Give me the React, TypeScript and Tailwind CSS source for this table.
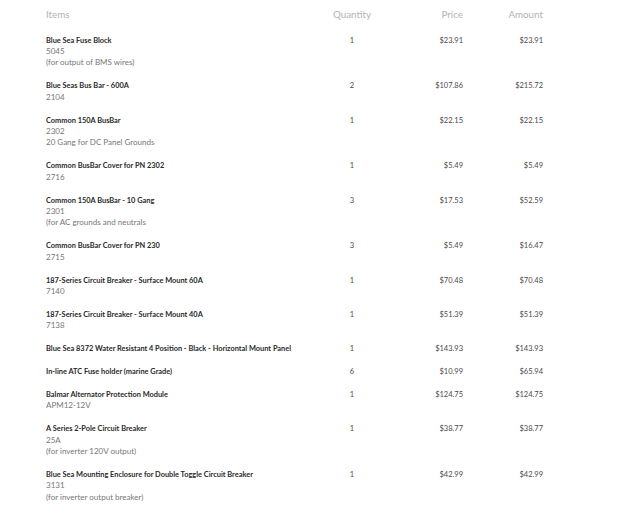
const items = [
  { name: "Blue Sea Fuse Block", lines: ["5045", "(for output of BMS wires)"], qty: 1, price: "$23.91", amount: "$23.91" },
  { name: "Blue Seas Bus Bar - 600A", lines: ["2104"], qty: 2, price: "$107.86", amount: "$215.72" },
  { name: "Common 150A BusBar", lines: ["2302", "20 Gang for DC Panel Grounds"], qty: 1, price: "$22.15", amount: "$22.15" },
  { name: "Common BusBar Cover for PN 2302", lines: ["2716"], qty: 1, price: "$5.49", amount: "$5.49" },
  { name: "Common 150A BusBar - 10 Gang", lines: ["2301", "(for AC grounds and neutrals"], qty: 3, price: "$17.53", amount: "$52.59" },
  { name: "Common BusBar Cover for PN 230", lines: ["2715"], qty: 3, price: "$5.49", amount: "$16.47" },
  { name: "187-Series Circuit Breaker - Surface Mount 60A", lines: ["7140"], qty: 1, price: "$70.48", amount: "$70.48" },
  { name: "187-Series Circuit Breaker - Surface Mount 40A", lines: ["7138"], qty: 1, price: "$51.39", amount: "$51.39" },
  { name: "Blue Sea 8372 Water Resistant 4 Position - Black - Horizontal Mount Panel", lines: [], qty: 1, price: "$143.93", amount: "$143.93" },
  { name: "In-line ATC Fuse holder (marine Grade)", lines: [], qty: 6, price: "$10.99", amount: "$65.94" },
  { name: "Balmar Alternator Protection Module", lines: ["APM12-12V"], qty: 1, price: "$124.75", amount: "$124.75" },
  { name: "A Series 2-Pole Circuit Breaker", lines: ["25A", "(for inverter 120V output)"], qty: 1, price: "$38.77", amount: "$38.77" },
  { name: "Blue Sea Mounting Enclosure for Double Toggle Circuit Breaker", lines: ["3131", "(for inverter output breaker)"], qty: 1, price: "$42.99", amount: "$42.99" },
];

export default function App() {
  return (
    <div className="min-h-screen bg-white pt-[8px] pl-[46px] font-['Lato',sans-serif]">
      <div className="w-[497px]">
        {/* header */}
        <div className="grid grid-cols-[270px_72px_75px_80px] text-[9.8px] leading-[12px] text-[#b3b3b3] mb-[14.5px]">
          <div>Items</div>
          <div className="text-center">Quantity</div>
          <div className="text-right">Price</div>
          <div className="text-right">Amount</div>
        </div>

        {items.map((it) => (
          <div
            key={it.name}
            className="grid grid-cols-[270px_72px_75px_80px] pb-[11.5px] text-[7.5px] leading-[11.4px]"
          >
            <div>
              <div className="font-bold text-[7.4px] text-[#2a2a2a]">{it.name}</div>
              {it.lines.map((l) => (
                <div key={l} className="text-[#777] text-[8px]">{l}</div>
              ))}
            </div>
            <div className="text-center text-[#4a4a4a]">{it.qty}</div>
            <div className="text-right text-[#4a4a4a]">{it.price}</div>
            <div className="text-right text-[#4a4a4a]">{it.amount}</div>
          </div>
        ))}
      </div>
    </div>
  );
}
